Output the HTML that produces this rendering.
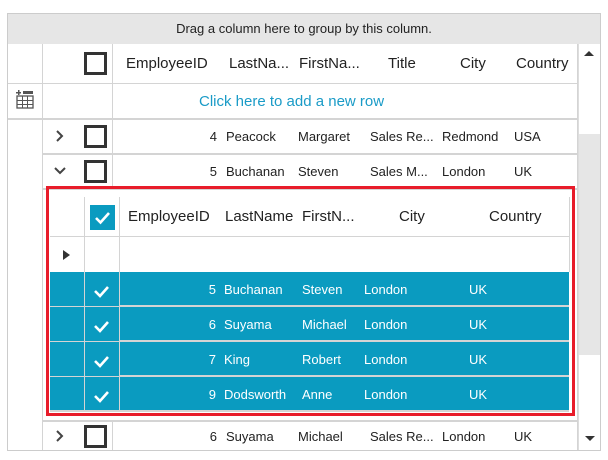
<!DOCTYPE html>
<html><head><style>
*{margin:0;padding:0;box-sizing:border-box}
body{width:608px;height:460px;background:#fff;font-family:"Liberation Sans",sans-serif;position:relative;overflow:hidden;color:#222}
.a{position:absolute}
.t{position:absolute;white-space:nowrap;font-size:13px}
.h{position:absolute;white-space:nowrap;font-size:15px;color:#222}
.hl{position:absolute;background:#d4d4d4;height:1px}
.vl{position:absolute;background:#d4d4d4;width:1px}
.cb{position:absolute;width:23px;height:23px;border:3px solid #333;background:#fff}
.w{color:#fff}
.r{text-align:right}
</style></head><body>
<div class="a" style="left:7px;top:13px;width:594px;height:438px;border:1px solid #ccc"></div>
<div class="a" style="left:8px;top:14px;width:592px;height:30px;background:#e6e6e6"></div>
<div class="t" style="left:8px;top:21px;width:592px;text-align:center;font-size:13px">Drag a column here to group by this column.</div>
<!-- scrollbar -->
<div class="a" style="left:578px;top:44px;width:22px;height:406px;background:#fff;border-left:1px solid #ddd"></div>
<div class="a" style="left:579px;top:134px;width:21px;height:221px;background:#e6e6e6"></div>
<div class="a" style="left:584px;top:51px;width:0;height:0;border-left:5px solid transparent;border-right:5px solid transparent;border-bottom:5px solid #333"></div>
<div class="a" style="left:585px;top:436px;width:0;height:0;border-left:5px solid transparent;border-right:5px solid transparent;border-top:5px solid #333"></div>
<!-- grid lines -->
<div class="vl" style="left:42px;top:44px;height:406px"></div>
<div class="vl" style="left:112px;top:44px;height:75px"></div>
<div class="vl" style="left:112px;top:120px;height:68px"></div>
<div class="vl" style="left:112px;top:422px;height:28px"></div>
<div class="hl" style="left:8px;top:83px;width:570px"></div>
<div class="hl" style="left:8px;top:118px;width:570px;height:2px"></div>
<div class="hl" style="left:42px;top:153px;width:536px;height:2px"></div>
<div class="hl" style="left:42px;top:188px;width:536px;height:2px"></div>
<div class="hl" style="left:42px;top:420px;width:536px;height:2px"></div>
<div class="vl" style="left:577px;top:44px;height:406px"></div>
<!-- header -->
<div class="cb" style="left:84px;top:52px"></div>
<div class="h" style="left:126px;top:55px">EmployeeID</div>
<div class="h" style="left:229px;top:55px">LastNa...</div>
<div class="h" style="left:299px;top:55px">FirstNa...</div>
<div class="h" style="left:388px;top:55px">Title</div>
<div class="h" style="left:460px;top:55px">City</div>
<div class="h" style="left:516px;top:55px">Country</div>
<!-- new row -->
<svg class="a" style="left:15px;top:90px" width="20" height="20" viewBox="0 0 20 20"><g fill="#555"><rect x="3" y="0" width="1.5" height="5"/><rect x="1" y="2" width="5" height="1.5"/><rect x="8" y="1" width="10" height="3"/><rect x="2" y="6" width="16" height="12" fill="none" stroke="#555" stroke-width="1.3"/><rect x="2" y="10" width="16" height="1"/><rect x="2" y="14" width="16" height="1"/><rect x="7" y="6" width="1" height="12"/><rect x="12" y="6" width="1" height="12"/></g></svg>
<div class="h" style="left:199px;top:93px;color:#1a9bc7;font-size:15px">Click here to add a new row</div>
<!-- row 4 -->
<svg class="a" style="left:55px;top:129px" width="10" height="14"><path d="M2 2 L7 7 L2 12" stroke="#444" stroke-width="2" fill="none"/></svg>
<div class="cb" style="left:84px;top:125px"></div>
<div class="t r" style="left:150px;top:129px;width:67px">4</div>
<div class="t" style="left:226px;top:129px">Peacock</div>
<div class="t" style="left:298px;top:129px">Margaret</div>
<div class="t" style="left:370px;top:129px">Sales Re...</div>
<div class="t" style="left:442px;top:129px">Redmond</div>
<div class="t" style="left:514px;top:129px">USA</div>
<!-- row 5 -->
<svg class="a" style="left:53px;top:166px" width="14" height="10"><path d="M2 2 L7 7 L12 2" stroke="#444" stroke-width="2" fill="none"/></svg>
<div class="cb" style="left:84px;top:160px"></div>
<div class="t r" style="left:150px;top:164px;width:67px">5</div>
<div class="t" style="left:226px;top:164px">Buchanan</div>
<div class="t" style="left:298px;top:164px">Steven</div>
<div class="t" style="left:370px;top:164px">Sales M...</div>
<div class="t" style="left:442px;top:164px">London</div>
<div class="t" style="left:514px;top:164px">UK</div>
<!-- detail -->
<div class="a" style="left:46px;top:186px;width:529px;height:230px;border:3px solid #e81c2a"></div>
<div class="hl" style="left:50px;top:236px;width:519px"></div>
<div class="vl" style="left:569px;top:197px;height:75px"></div>
<div class="a" style="left:90px;top:205px;width:25px;height:25px;background:#0a9bc0"></div>
<svg class="a" style="left:90px;top:205px" width="25" height="25"><path d="M6 13 L10.5 17.5 L19 8" stroke="#fff" stroke-width="2.6" fill="none"/></svg>
<div class="h" style="left:128px;top:208px">EmployeeID</div>
<div class="h" style="left:225px;top:208px">LastName</div>
<div class="h" style="left:302px;top:208px">FirstN...</div>
<div class="h" style="left:399px;top:208px">City</div>
<div class="h" style="left:489px;top:208px">Country</div>
<div class="a" style="left:63px;top:250px;width:0;height:0;border-top:5px solid transparent;border-bottom:5px solid transparent;border-left:7px solid #333"></div>
<div class="a" style="left:50px;top:272px;width:519px;height:138px;background:#0a9bc0"></div>
<div class="vl" style="left:84px;top:197px;height:213px"></div>
<div class="vl" style="left:119px;top:197px;height:213px"></div>
<div class="hl" style="left:119px;top:305px;width:450px;height:2px"></div>
<div class="hl" style="left:119px;top:340px;width:450px;height:2px"></div>
<div class="hl" style="left:119px;top:375px;width:450px;height:2px"></div>
<div class="hl" style="left:50px;top:306px;width:69px"></div>
<div class="hl" style="left:50px;top:341px;width:69px"></div>
<div class="hl" style="left:50px;top:376px;width:69px"></div>
<div class="hl" style="left:50px;top:410px;width:519px;height:2px"></div>
<svg class="a" style="left:90px;top:278px" width="25" height="130"><g stroke="#fff" stroke-width="2.6" fill="none"><path d="M5 13 L10 18 L18 9"/><path d="M5 48 L10 53 L18 44"/><path d="M5 83 L10 88 L18 79"/><path d="M5 118 L10 123 L18 114"/></g></svg>
<div class="t r w" style="left:150px;top:282px;width:66px">5</div><div class="t w" style="left:224px;top:282px">Buchanan</div><div class="t w" style="left:302px;top:282px">Steven</div><div class="t w" style="left:364px;top:282px">London</div><div class="t w" style="left:469px;top:282px">UK</div>
<div class="t r w" style="left:150px;top:317px;width:66px">6</div><div class="t w" style="left:224px;top:317px">Suyama</div><div class="t w" style="left:302px;top:317px">Michael</div><div class="t w" style="left:364px;top:317px">London</div><div class="t w" style="left:469px;top:317px">UK</div>
<div class="t r w" style="left:150px;top:352px;width:66px">7</div><div class="t w" style="left:224px;top:352px">King</div><div class="t w" style="left:302px;top:352px">Robert</div><div class="t w" style="left:364px;top:352px">London</div><div class="t w" style="left:469px;top:352px">UK</div>
<div class="t r w" style="left:150px;top:387px;width:66px">9</div><div class="t w" style="left:224px;top:387px">Dodsworth</div><div class="t w" style="left:302px;top:387px">Anne</div><div class="t w" style="left:364px;top:387px">London</div><div class="t w" style="left:469px;top:387px">UK</div>
<!-- row 6 -->
<svg class="a" style="left:55px;top:429px" width="10" height="14"><path d="M2 2 L7 7 L2 12" stroke="#444" stroke-width="2" fill="none"/></svg>
<div class="cb" style="left:84px;top:425px"></div>
<div class="t r" style="left:150px;top:429px;width:67px">6</div>
<div class="t" style="left:226px;top:429px">Suyama</div>
<div class="t" style="left:298px;top:429px">Michael</div>
<div class="t" style="left:370px;top:429px">Sales Re...</div>
<div class="t" style="left:442px;top:429px">London</div>
<div class="t" style="left:514px;top:429px">UK</div>
</body></html>
